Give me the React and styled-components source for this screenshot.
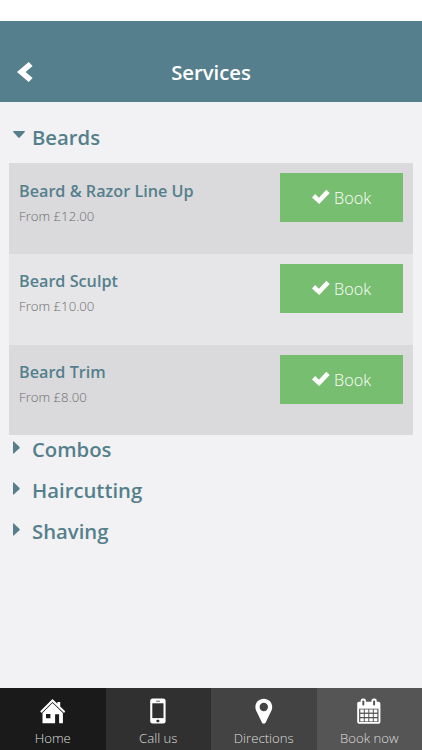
import React, { useState } from 'react';
import styled, { createGlobalStyle } from 'styled-components';

const GlobalStyle = createGlobalStyle`
  * {
    box-sizing: border-box;
  }

  body {
    margin: 0;
    background: #f2f2f4;
    font-family: 'Open Sans', 'Noto Sans', sans-serif;
  }
`;

const Screen = styled.div`
  display: flex;
  flex-direction: column;
  height: 100vh;
  overflow: hidden;
`;

const StatusBar = styled.div`
  flex: none;
  height: 21px;
  background: #fff;
`;

const Header = styled.header`
  flex: none;
  display: grid;
  grid-template-columns: 60px 1fr 60px;
  align-items: center;
  height: 81px;
  padding-top: 21px;
  background: #557f8c;
`;

const BackButton = styled.button`
  display: flex;
  padding: 0 0 1px 17px;
  border: 0;
  background: none;
`;

const Title = styled.h1`
  margin: 0;
  color: #fff;
  font-size: 20.3px;
  font-weight: 600;
  line-height: 28px;
  text-align: center;
`;

const Content = styled.main`
  flex: 1;
  padding: 15px 9px 0;
`;

const GroupTitle = styled.h2`
  display: flex;
  height: ${(props) => (props.$open ? '46.4px' : '40.7px')};
  margin: 0;
  color: #557f8c;
  font-size: 20.3px;
  font-weight: 600;
  line-height: ${(props) => (props.$open ? '40px' : '29.4px')};
  cursor: pointer;
`;

const Caret = styled.span`
  flex: none;
  display: flex;
  width: 23px;
  padding: ${(props) => (props.$open ? '14px 0 0 4px' : '6px 0 0 4px')};
`;

const Row = styled.div`
  display: flex;
  justify-content: space-between;
  height: 90.6px;
  padding: 10px 10px 0;
  background: ${(props) => (props.$odd ? '#e6e6e8' : '#dadadc')};
`;

const Name = styled.h3`
  margin: 5.5px 0 0;
  color: #557f8c;
  font-size: 16.2px;
  font-weight: 600;
  line-height: 24px;
`;

const Price = styled.p`
  margin: 3px 0 0;
  color: #6c6c6e;
  font-size: 13.2px;
  font-weight: 300;
  line-height: 20px;
`;

const BookButton = styled.button`
  display: flex;
  align-items: center;
  justify-content: center;
  gap: 4px;
  width: 123px;
  height: 49px;
  padding: 1px 0 0;
  border: 0;
  background: #77be70;
  color: #fff;
  font-family: inherit;
  font-size: 16.2px;
  font-weight: 300;

  svg {
    margin-bottom: 2px;
  }
`;

const TabBar = styled.nav`
  flex: none;
  display: grid;
  grid-template-columns: repeat(4, 1fr);
  height: 62px;
`;

const Tab = styled.a`
  display: flex;
  flex-direction: column;
  align-items: center;
  padding-top: 10px;
  background: ${(props) => props.$color};
  color: #ddd;
  font-size: 13.2px;
  font-weight: 300;
  line-height: 20px;

  svg {
    flex: none;
    margin-bottom: 4px;
  }
`;

const BackIcon = () => (
  <svg width="16" height="22" viewBox="0 0 16 22" fill="#fff">
    <path d="M0 11 L11.7 .9 L15.6 5 L8.6 11 L15.6 17 L11.7 21.1Z" />
  </svg>
);

const CheckIcon = () => (
  <svg width="18" height="16" viewBox="0 0 18 16" fill="#fff">
    <path d="M0 8.4 3.1 5 6.9 8.8 14.3.7 17.7 4 7.2 15Z" />
  </svg>
);

const HomeIcon = () => (
  <svg width="26" height="26" viewBox="0 0 26 26" fill="#fff">
    <path d="M.2 13.2 12.5 1 17.4 5.8V3.9h2.8v4.7l5 4.7-1.1 1.6L12.5 3.9 1.4 14.9Z" />
    <path
      fillRule="evenodd"
      d="M2.5 14.9 12.5 5 22.9 14.9V25.2h-3.8v-9h-4V25.2H2.5ZM6 16.1v4.2h4.4v-4.2Z"
    />
  </svg>
);

const PhoneIcon = () => (
  <svg width="16" height="26" viewBox="0 0 16 26">
    <rect x=".2" y=".4" width="15.4" height="25.2" rx="2.5" fill="#fff" />
    <rect x="2.3" y="5.3" width="11.2" height="14.8" fill="#303030" />
    <rect x="6" y="2.7" width="4" height=".9" rx=".4" fill="#303030" />
    <rect x="6.4" y="21.8" width="3" height="2.4" rx="1" fill="#303030" />
  </svg>
);

const PinIcon = () => (
  <svg width="18" height="26" viewBox="0 0 18 26" fill="#fff">
    <path
      fillRule="evenodd"
      d="M8.8.8C4.1.8.4 4.4.4 8.9c0 2.2.8 3.8 1.7 5.7l4.8 9.9c.8 1.6 3 1.6 3.8 0l4.8-9.9c.9-1.9 1.7-3.5 1.7-5.7C17.2 4.4 13.5.8 8.8.8Zm0 4a4.2 4.2 0 1 1 0 8.4 4.2 4.2 0 0 1 0-8.4Z"
    />
  </svg>
);

const CalendarIcon = () => (
  <svg width="24" height="26" viewBox="0 0 24 26">
    <rect x=".2" y="3.8" width="23.2" height="22" rx="1.8" fill="#fff" />
    <rect x="2.1" y="10.7" width="19.4" height="13.3" fill="#555" />
    {[6.3, 17.1].map((x) => (
      <g key={x}>
        <rect x={x - 2.7} y=".5" width="5.4" height="8.3" rx="2.4" fill="#fff" />
        <rect x={x - 1} y="2.5" width="2" height="5" rx=".9" fill="#555" />
      </g>
    ))}
    {[11.5, 15.9, 20.3].map((y) =>
      [3.3, 7.8, 12.3, 16.8].map((x) => (
        <rect key={`${x}-${y}`} x={x} y={y} width="3.5" height="3.1" fill="#fff" />
      ))
    )}
  </svg>
);

const CaretIcon = ({ open }) =>
  open ? (
    <svg width="12" height="7" viewBox="0 0 12 7" fill="currentColor">
      <path d="M0 .8Q0 0 .8 0H11.2Q12 0 12 .8L6.7 6.4Q6 7 5.3 6.4Z" />
    </svg>
  ) : (
    <svg width="7" height="13" viewBox="0 0 7 13" fill="currentColor">
      <path d="M0 .9Q0 0 .8.4L6.4 5.8Q7 6.5 6.4 7.2L.8 12.6Q0 13 0 12.1Z" />
    </svg>
  );

const groups = [
  {
    title: 'Beards',
    services: [
      { name: 'Beard & Razor Line Up', price: '£12.00' },
      { name: 'Beard Sculpt', price: '£10.00' },
      { name: 'Beard Trim', price: '£8.00' },
    ],
  },
  { title: 'Combos', services: [] },
  { title: 'Haircutting', services: [] },
  { title: 'Shaving', services: [] },
];

const tabs = [
  { label: 'Home', color: '#1a1a1a', icon: <HomeIcon /> },
  { label: 'Call us', color: '#303030', icon: <PhoneIcon /> },
  { label: 'Directions', color: '#434343', icon: <PinIcon /> },
  { label: 'Book now', color: '#555', icon: <CalendarIcon /> },
];

function App() {
  const [selected, setSelected] = useState('Beards');

  return (
    <Screen>
      <GlobalStyle />
      <StatusBar />
      <Header>
        <BackButton aria-label="Back">
          <BackIcon />
        </BackButton>
        <Title>Services</Title>
      </Header>

      <Content>
        {groups.map((group) => {
          const open = selected === group.title;
          return (
            <section key={group.title}>
              <GroupTitle $open={open} onClick={() => setSelected(open ? '' : group.title)}>
                <Caret $open={open}>
                  <CaretIcon open={open} />
                </Caret>
                {group.title}
              </GroupTitle>
              {open &&
                group.services.map((e, i) => (
                  <Row key={e.name} $odd={i % 2 === 1}>
                    <div>
                      <Name>{e.name}</Name>
                      <Price>From {e.price}</Price>
                    </div>
                    <BookButton>
                      <CheckIcon />
                      Book
                    </BookButton>
                  </Row>
                ))}
            </section>
          );
        })}
      </Content>

      <TabBar>
        {tabs.map((tab) => (
          <Tab key={tab.label} $color={tab.color}>
            {tab.icon}
            {tab.label}
          </Tab>
        ))}
      </TabBar>
    </Screen>
  );
}

export default App;
